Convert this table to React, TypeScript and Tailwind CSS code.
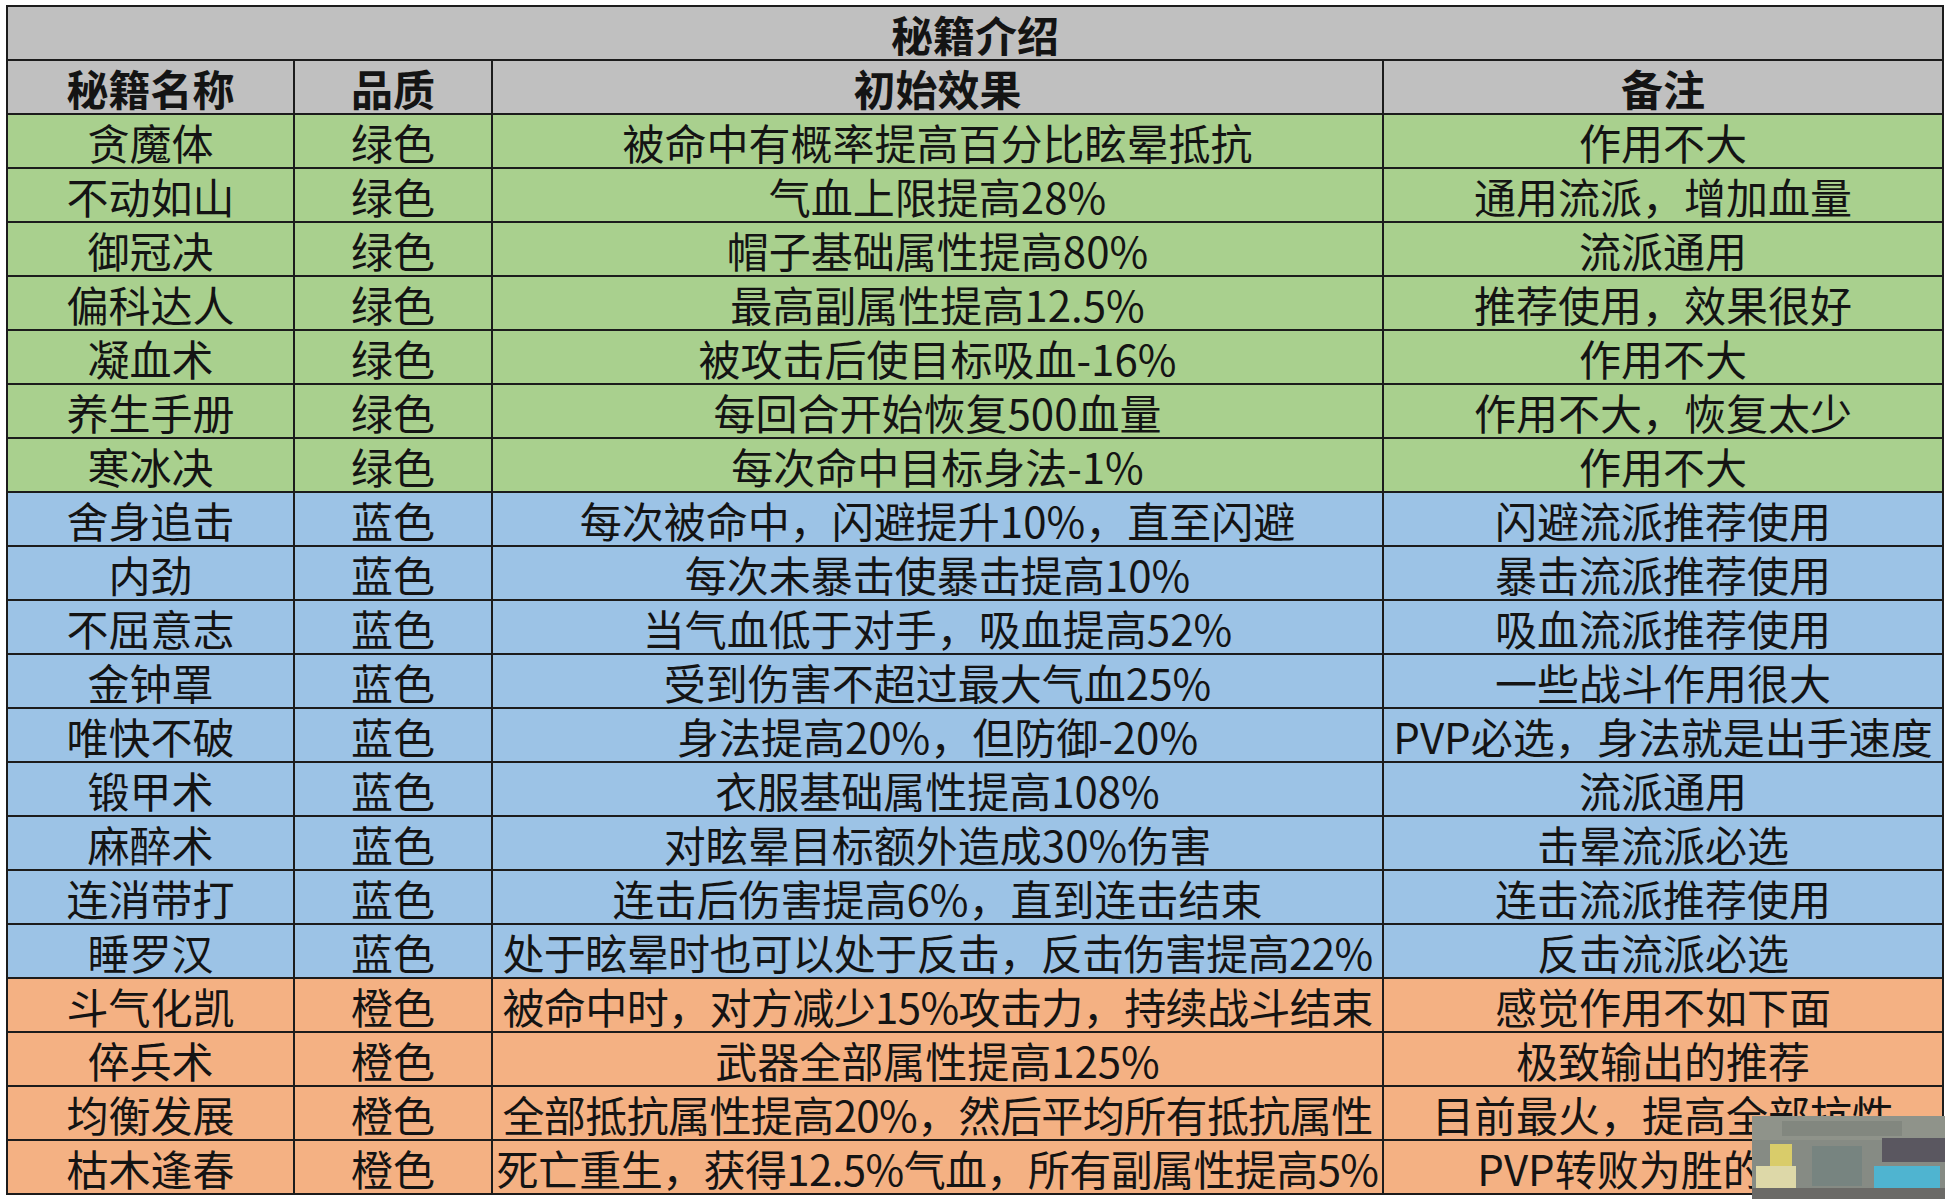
import React from "react";

type Row = [string, string, string, string];

const green: Row[] = [
  ["贪魔体", "绿色", "被命中有概率提高百分比眩晕抵抗", "作用不大"],
  ["不动如山", "绿色", "气血上限提高28%", "通用流派，增加血量"],
  ["御冠决", "绿色", "帽子基础属性提高80%", "流派通用"],
  ["偏科达人", "绿色", "最高副属性提高12.5%", "推荐使用，效果很好"],
  ["凝血术", "绿色", "被攻击后使目标吸血-16%", "作用不大"],
  ["养生手册", "绿色", "每回合开始恢复500血量", "作用不大，恢复太少"],
  ["寒冰决", "绿色", "每次命中目标身法-1%", "作用不大"],
];

const blue: Row[] = [
  ["舍身追击", "蓝色", "每次被命中，闪避提升10%，直至闪避", "闪避流派推荐使用"],
  ["内劲", "蓝色", "每次未暴击使暴击提高10%", "暴击流派推荐使用"],
  ["不屈意志", "蓝色", "当气血低于对手，吸血提高52%", "吸血流派推荐使用"],
  ["金钟罩", "蓝色", "受到伤害不超过最大气血25%", "一些战斗作用很大"],
  ["唯快不破", "蓝色", "身法提高20%，但防御-20%", "PVP必选，身法就是出手速度"],
  ["锻甲术", "蓝色", "衣服基础属性提高108%", "流派通用"],
  ["麻醉术", "蓝色", "对眩晕目标额外造成30%伤害", "击晕流派必选"],
  ["连消带打", "蓝色", "连击后伤害提高6%，直到连击结束", "连击流派推荐使用"],
  ["睡罗汉", "蓝色", "处于眩晕时也可以处于反击，反击伤害提高22%", "反击流派必选"],
];

const orange: Row[] = [
  ["斗气化凯", "橙色", "被命中时，对方减少15%攻击力，持续战斗结束", "感觉作用不如下面"],
  ["倅兵术", "橙色", "武器全部属性提高125%", "极致输出的推荐"],
  ["均衡发展", "橙色", "全部抵抗属性提高20%，然后平均所有抵抗属性", "目前最火，提高全部抗性"],
  ["枯木逢春", "橙色", "死亡重生，获得12.5%气血，所有副属性提高5%", "PVP转败为胜的关键"],
];

// excel style cell: bottom aligned, centered
const cell =
  "border-2 border-[#1c1c1c] p-0 pb-[4px] align-bottom text-center whitespace-nowrap leading-none h-[54px]";

function Cells({ row, bg }: { row: Row; bg: string }) {
  return (
    <tr className={bg}>
      {row.map((t, i) => (
        <td key={i} className={t.length > 20 ? cell + " tracking-[-0.6px]" : cell}>
          {t}
        </td>
      ))}
    </tr>
  );
}

// blurred logo in the corner
function Watermark() {
  return (
    <div className="absolute left-[1752px] top-[1116px] w-[193px] h-[83px] bg-[#868b84] overflow-hidden">
      <div className="absolute left-0 top-0 w-full h-[24px] bg-[#8f938a]" />
      <div className="absolute left-[30px] top-[5px] w-[120px] h-[15px] bg-[#82877f]" />
      <div className="absolute left-[18px] top-[28px] w-[22px] h-[22px] bg-[#d9cc6a]" />
      <div className="absolute left-[4px] top-[50px] w-[40px] h-[22px] bg-[#ddd8a8]" />
      <div className="absolute left-[60px] top-[30px] w-[50px] h-[40px] bg-[#778480]" />
      <div className="absolute left-[130px] top-[22px] w-[63px] h-[24px] bg-[#5a5760]" />
      <div className="absolute left-[122px] top-[50px] w-[66px] h-[22px] bg-[#4fb4d0]" />
      <div className="absolute left-0 top-[72px] w-full h-[11px] bg-[#6b6a67]" />
    </div>
  );
}

export default function App() {
  return (
    <div
      className="relative w-[1945px] h-[1199px] bg-white text-[#141414] text-[42px] overflow-hidden"
      style={{ fontFamily: '"Noto Sans CJK SC", "Noto Sans", sans-serif' }}
    >
      <div className="pl-[6px] pt-[5px]">
        <table className="table-fixed border-collapse w-[1936px]">
          <colgroup>
            <col className="w-[287px]" />
            <col className="w-[198px]" />
            <col className="w-[891px]" />
            <col className="w-[560px]" />
          </colgroup>
          <tbody>
            <tr className="bg-[#c0c0c0]">
              <td colSpan={4} className={cell + " font-bold"}>
                秘籍介绍
              </td>
            </tr>
            <tr className="bg-[#c0c0c0] font-bold">
              <td className={cell}>秘籍名称</td>
              <td className={cell}>品质</td>
              <td className={cell}>初始效果</td>
              <td className={cell}>备注</td>
            </tr>
            {green.map((r) => (
              <Cells key={r[0]} row={r} bg="bg-[#a9d08e]" />
            ))}
            {blue.map((r) => (
              <Cells key={r[0]} row={r} bg="bg-[#9cc3e6]" />
            ))}
            {orange.map((r) => (
              <Cells key={r[0]} row={r} bg="bg-[#f4b183]" />
            ))}
          </tbody>
        </table>
      </div>
      <Watermark />
    </div>
  );
}
